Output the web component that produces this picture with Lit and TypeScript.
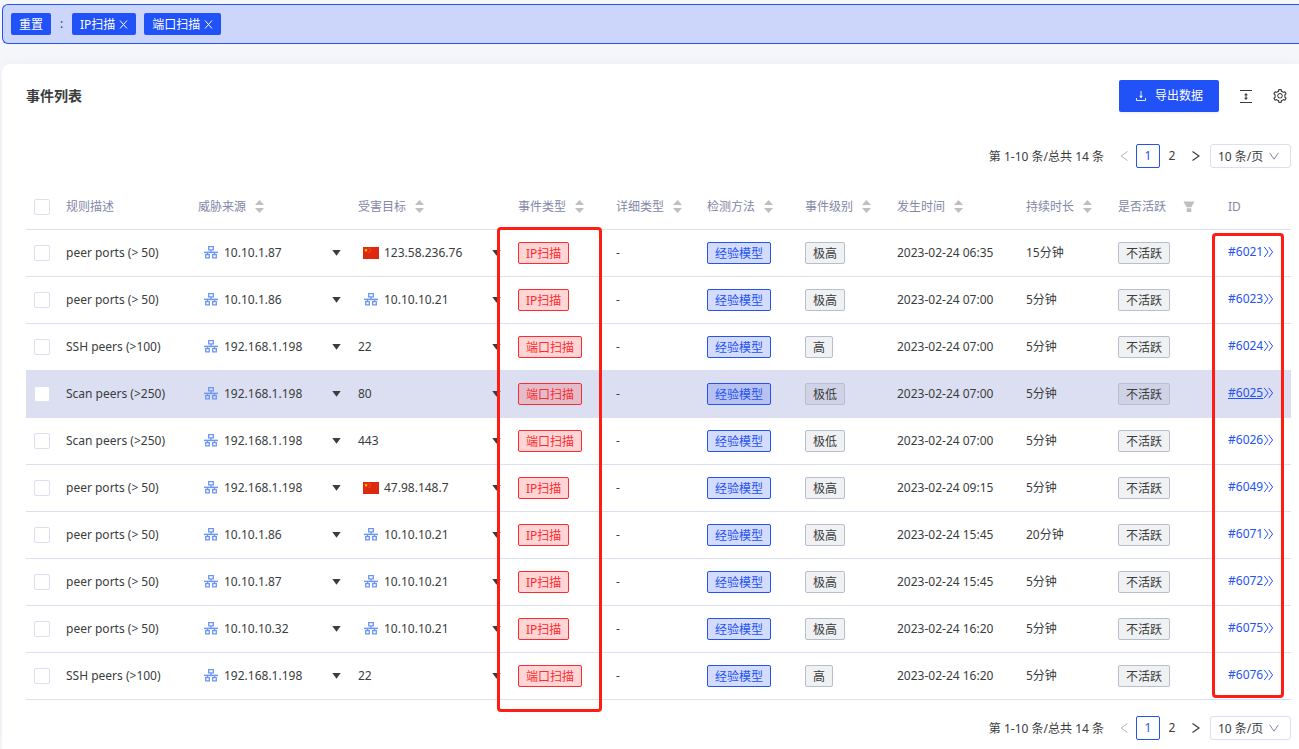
import { LitElement, html, css, svg, nothing } from "lit";
import { customElement, property, state } from "lit/decorators.js";

interface Host {
  kind: "lan" | "cn" | "port";
  text: string;
}
interface EventRow {
  rule: string;
  source: string;
  target: Host;
  type: string;
  level: string;
  time: string;
  duration: string;
  id: string;
  active?: boolean;
}

const lan = (text: string): Host => ({ kind: "lan", text });
const cn = (text: string): Host => ({ kind: "cn", text });
const port = (text: string): Host => ({ kind: "port", text });

const ROWS: EventRow[] = [
  { rule: "peer ports (> 50)", source: "10.10.1.87", target: cn("123.58.236.76"), type: "IP扫描", level: "极高", time: "2023-02-24 06:35", duration: "15分钟", id: "6021" },
  { rule: "peer ports (> 50)", source: "10.10.1.86", target: lan("10.10.10.21"), type: "IP扫描", level: "极高", time: "2023-02-24 07:00", duration: "5分钟", id: "6023" },
  { rule: "SSH peers (>100)", source: "192.168.1.198", target: port("22"), type: "端口扫描", level: "高", time: "2023-02-24 07:00", duration: "5分钟", id: "6024" },
  { rule: "Scan peers (>250)", source: "192.168.1.198", target: port("80"), type: "端口扫描", level: "极低", time: "2023-02-24 07:00", duration: "5分钟", id: "6025", active: true },
  { rule: "Scan peers (>250)", source: "192.168.1.198", target: port("443"), type: "端口扫描", level: "极低", time: "2023-02-24 07:00", duration: "5分钟", id: "6026" },
  { rule: "peer ports (> 50)", source: "192.168.1.198", target: cn("47.98.148.7"), type: "IP扫描", level: "极高", time: "2023-02-24 09:15", duration: "5分钟", id: "6049" },
  { rule: "peer ports (> 50)", source: "10.10.1.86", target: lan("10.10.10.21"), type: "IP扫描", level: "极高", time: "2023-02-24 15:45", duration: "20分钟", id: "6071" },
  { rule: "peer ports (> 50)", source: "10.10.1.87", target: lan("10.10.10.21"), type: "IP扫描", level: "极高", time: "2023-02-24 15:45", duration: "5分钟", id: "6072" },
  { rule: "peer ports (> 50)", source: "10.10.10.32", target: lan("10.10.10.21"), type: "IP扫描", level: "极高", time: "2023-02-24 16:20", duration: "5分钟", id: "6075" },
  { rule: "SSH peers (>100)", source: "192.168.1.198", target: port("22"), type: "端口扫描", level: "高", time: "2023-02-24 16:20", duration: "5分钟", id: "6076" },
];

const COLUMNS: { title: string; tool?: "sort" | "filter" }[] = [
  { title: "规则描述" },
  { title: "威胁来源", tool: "sort" },
  { title: "受害目标", tool: "sort" },
  { title: "事件类型", tool: "sort" },
  { title: "详细类型", tool: "sort" },
  { title: "检测方法", tool: "sort" },
  { title: "事件级别", tool: "sort" },
  { title: "发生时间", tool: "sort" },
  { title: "持续时长", tool: "sort" },
  { title: "是否活跃", tool: "filter" },
  { title: "ID" },
];

const base = css`
  *,
  *::before,
  *::after {
    box-sizing: border-box;
  }
  button,
  select,
  input {
    font: inherit;
    color: inherit;
    margin: 0;
  }
  button {
    padding: 0;
    border: 0;
    background: none;
    cursor: pointer;
  }
  svg {
    display: block;
    flex: none;
  }
`;

const icon = (w: number, h: number, box: string, body: unknown) =>
  html`<svg width=${w} height=${h} viewBox=${box} fill="none" aria-hidden="true">${body}</svg>`;

const closeIcon = icon(9, 9, "0 0 9 9", svg`<path d="M1 .5l7 8M8 .5l-7 8" stroke="currentColor"/>`);
const downloadIcon = icon(12, 12, "0 0 12 12", svg`
  <path d="M6 1v6.500M1.500 8v2.500h9V8" stroke="currentColor" stroke-opacity=".85"/>
  <path d="M6 8.200L4.200 5.800h3.600z" fill="currentColor"/>`);
const heightIcon = icon(14, 14, "0 0 14 14", svg`
  <path d="M1 1.500h12M1 13.500h12M7 5v5" stroke="currentColor"/>
  <path d="M7 4l2 2.200H5zM7 11l2-2.200H5z" fill="currentColor"/>`);
const gearIcon = icon(16, 16, "0 0 1024 1024", svg`
  <path fill="currentColor" d="M924.8 625.7l-65.5-56c3.1-19 4.7-38.4 4.7-57.8s-1.6-38.8-4.7-57.8l65.5-56a32.03 32.03 0 009.3-35.2l-.9-2.6a443.74 443.74 0 00-79.7-137.9l-1.8-2.1a32.12 32.12 0 00-35.1-9.5l-81.3 28.9c-30-24.6-63.5-44-99.7-57.6l-15.7-85a32.05 32.05 0 00-25.8-25.7l-2.7-.5c-52.1-9.4-106.9-9.4-159 0l-2.7.5a32.05 32.05 0 00-25.8 25.7l-15.8 85.4a351.86 351.86 0 00-99 57.4l-81.9-29.1a32 32 0 00-35.1 9.5l-1.8 2.1a446.02 446.02 0 00-79.7 137.9l-.9 2.6c-4.5 12.5-.8 26.5 9.3 35.2l66.3 56.6c-3.1 18.8-4.6 38-4.6 57.1 0 19.2 1.5 38.4 4.6 57.1L99 625.5a32.03 32.03 0 00-9.3 35.2l.9 2.6c18.1 50.4 44.9 96.9 79.7 137.9l1.8 2.1a32.12 32.12 0 0035.1 9.5l81.9-29.1c29.8 24.5 63.1 43.9 99 57.4l15.8 85.4a32.05 32.05 0 0025.8 25.7l2.7.5a449.4 449.4 0 00159 0l2.7-.5a32.05 32.05 0 0025.8-25.7l15.7-85a350 350 0 0099.7-57.6l81.3 28.9a32 32 0 0035.1-9.5l1.8-2.1c34.8-41.1 61.6-87.5 79.7-137.9l.9-2.6c4.5-12.3.8-26.3-9.3-35zM788.3 465.9c2.5 15.1 3.8 30.6 3.8 46.1s-1.3 31-3.8 46.1l-6.6 40.1 74.7 63.9a370.03 370.03 0 01-42.6 73.6L721 702.8l-31.4 25.8c-23.9 19.6-50.5 35-79.3 45.8l-38.1 14.3-17.9 97a377.5 377.5 0 01-85 0l-17.9-97.2-37.8-14.5c-28.5-10.8-55-26.2-78.7-45.7l-31.4-25.9-93.4 33.2c-17-22.9-31.2-47.6-42.6-73.6l75.5-64.5-6.5-40c-2.4-14.9-3.7-30.3-3.7-45.5 0-15.3 1.2-30.6 3.7-45.5l6.5-40-75.5-64.5c11.3-26.1 25.6-50.7 42.6-73.6l93.4 33.2 31.4-25.9c23.7-19.5 50.2-34.9 78.7-45.7l37.9-14.3 17.9-97.2c28.1-3.2 56.8-3.2 85 0l17.9 97 38.1 14.3c28.7 10.8 55.4 26.2 79.3 45.8l31.4 25.8 92.8-32.9c17 22.9 31.2 47.6 42.6 73.6L781.8 426l6.5 39.9zM512 326c-97.2 0-176 78.8-176 176s78.8 176 176 176 176-78.8 176-176-78.800-176-176-176zm79.200 255.200A111.600 111.600 0 01512 614c-29.900 0-58-11.700-79.200-32.800A111.600 111.600 0 01400 502c0-29.900 11.700-58 32.800-79.200C454 401.600 482.100 390 512 390c29.900 0 58 11.600 79.200 32.800A111.600 111.600 0 01624 502c0 29.900-11.700 58-32.800 79.200z"/>`);
const prevIcon = icon(8, 12, "0 0 8 12", svg`<path d="M7.500 1.500L1 6l6.500 4.500" stroke="currentColor"/>`);
const nextIcon = icon(8, 12, "0 0 8 12", svg`<path d="M.5 1.500L7 6 .5 10.500" stroke="currentColor" stroke-width="1.2"/>`);
const downIcon = icon(10, 8, "0 0 10 8", svg`<path d="M.6 .8L5 7.200 9.400 .8" stroke="currentColor"/>`);
const sortIcon = icon(9, 14, "0 0 9 14", svg`
  <path d="M4.500 0L9 5H0zM0 8h9l-4.500 5z" fill="#bfbfbf"/>`);
const filterIcon = icon(12, 12, "0 0 12 12", svg`
  <path d="M.5 .5h11L8.300 6.200H3.700zM3.700 7.200h4.600v3.800H3.700z" fill="#bfbfbf"/>`);
const lanIcon = icon(14, 14, "0 0 14 14", svg`
  <path d="M4.700.7h4.600v3.200H4.700zM7 4v2M3.500 6.500v2M10.500 6.500v2M1.700 8.600h3.600v3.200H1.700zM8.700 8.600h3.600v3.200H8.700z" stroke="#6c96f3" stroke-width="1.3"/>
  <path d="M0 6.400h14" stroke="#6c96f3" stroke-width="1.500"/>`);
const flagIcon = icon(16, 12, "0 0 16 12", svg`
  <path d="M0 0h16v12H0z" fill="#de2910"/>
  <path d="M3 1.200l.5 1.400H5l-1.200.9.500 1.500L3 4.100l-1.300.9.500-1.500L1 2.600h1.500z" fill="#ffc800"/>
  <g fill="#f08a10"><circle cx="6" cy="1.300" r=".5"/><circle cx="7.300" cy="2.500" r=".5"/><circle cx="7.300" cy="4.100" r=".5"/><circle cx="6" cy="5.300" r=".5"/></g>`);
const caretIcon = icon(9, 6, "0 0 9 6", svg`<path d="M.3 0h8.400L4.500 5.800z" fill="#3a3c3e"/>`);
const moreIcon = icon(11, 12, "0 0 11 12", svg`
  <path d="M1.200.9l3.900 5.100-3.900 5.100M5.700.9l3.900 5.100-3.900 5.100" stroke="currentColor"/>`);

@customElement("event-filters")
export class EventFilters extends LitElement {
  @state() private filters = ["IP扫描", "端口扫描"];

  static styles = [
    base,
    css`
      :host {
        display: flex;
        align-items: center;
        gap: 8px;
        height: 40px;
        padding: 0 8px;
        border: 1px solid #2452f5;
        border-right: 0;
        border-radius: 6px 0 0 6px;
        background: #ccd6fa;
      }
      .chip {
        display: flex;
        align-items: center;
        gap: 4px;
        height: 22px;
        padding: 1px 8px 0;
        border-radius: 2px;
        background: #2152f8;
        color: #fff;
        line-height: 22px;
      }
      .colon {
        width: 5px;
        text-align: center;
      }
    `,
  ];

  render() {
    return html`
      <button class="chip" @click=${() => (this.filters = [])}>重置</button>
      <span class="colon">:</span>
      ${this.filters.map(
        (name) => html`<span class="chip">${name}<button
            aria-label="移除 ${name}"
            @click=${() => (this.filters = this.filters.filter((f) => f !== name))}
          >${closeIcon}</button></span>`
      )}
    `;
  }
}

@customElement("page-nav")
export class PageNav extends LitElement {
  static styles = [
    base,
    css`
      :host {
        display: flex;
        justify-content: flex-end;
        align-items: center;
        height: 24px;
        line-height: 22px;
      }
      .total {
        margin-right: 8px;
        padding-top: 2px;
      }
      .page {
        display: flex;
        align-items: center;
        justify-content: center;
        width: 24px;
        height: 24px;
        border-radius: 2px;
      }
      .current {
        border: 1px solid #2452f5;
        color: #2452f5;
      }
      .page:disabled {
        color: #b4b4b4;
        cursor: default;
      }
      .size {
        display: grid;
        align-items: center;
        margin-left: 2px;
        width: 81px;
      }
      .size > * {
        grid-area: 1 / 1;
      }
      .size select {
        appearance: none;
        width: 100%;
        height: 24px;
        padding: 1px 7px 0;
        border: 1px solid #dcdff1;
        border-radius: 3px;
        background: #fff;
        outline: 0;
      }
      .arrow {
        justify-self: end;
        margin-right: 12px;
        color: #8487a7;
        pointer-events: none;
      }
    `,
  ];

  render() {
    return html`
      <span class="total">第 1-10 条/总共 14 条</span>
      <button class="page" disabled aria-label="上一页">${prevIcon}</button>
      <button class="page current">1</button>
      <button class="page">2</button>
      <button class="page" aria-label="下一页">${nextIcon}</button>
      <label class="size">
        <select aria-label="每页条数">
          <option>10 条/页</option>
          <option>20 条/页</option>
          <option>50 条/页</option>
        </select>
        <span class="arrow">${downIcon}</span>
      </label>
    `;
  }
}

@customElement("event-table")
export class EventTable extends LitElement {
  @property({ attribute: false }) rows: EventRow[] = [];

  static styles = [
    base,
    css`
      :host {
        display: block;
        position: relative;
      }
      table {
        width: 100%;
        table-layout: fixed;
        border-collapse: separate;
        border-spacing: 0;
      }
      .w-check { width: 32px; }
      .w-rule { width: 132px; }
      .w-host { width: 160px; }
      .w-type { width: 98px; }
      .w-detail { width: 91px; }
      .w-method { width: 98px; }
      .w-level { width: 92px; }
      .w-time { width: 129px; }
      .w-span { width: 92px; }
      .w-state { width: 110px; }
      .w-id { width: 71px; }
      th,
      td {
        height: 47px;
        padding: 0 8px;
        border-bottom: 1px solid #dcdff1;
        text-align: left;
        vertical-align: middle;
        white-space: nowrap;
      }
      th {
        height: 46px;
        color: #8487a7;
        font-weight: 400;
      }
      .active td {
        background: #dcdff1;
      }
      .head {
        display: flex;
        align-items: center;
        gap: 9px;
      }
      .head.wide {
        gap: 17px;
      }
      .check {
        display: block;
        appearance: none;
        width: 16px;
        height: 16px;
        border: 1px solid #dcdff1;
        border-radius: 2px;
        background: #fff;
      }
      .host {
        display: flex;
        align-items: center;
      }
      .mark {
        display: flex;
        justify-content: center;
        width: 26px;
      }
      .caret {
        margin-left: auto;
        padding: 4px 1px 4px 2px;
      }
      .tag {
        display: inline-block;
        height: 22px;
        padding: 0 7px;
        border: 1px solid;
        border-radius: 2px;
        line-height: 22px;
        vertical-align: middle;
      }
      .red {
        color: #fd2c2f;
        background: rgba(253, 44, 47, 0.2);
      }
      .blue {
        color: #2452f5;
        background: rgba(36, 82, 245, 0.2);
      }
      .gray {
        border-color: #b9bdcc;
        background: rgba(60, 75, 90, 0.08);
      }
      .link {
        display: flex;
        align-items: center;
        padding-bottom: 2px;
        color: #2452f5;
        text-decoration: none;
      }
      .active .link {
        text-decoration: underline;
      }
      .marks {
        position: absolute;
        inset: 0;
        display: grid;
        grid-template-columns: 32fr 132fr 160fr 160fr 98fr 91fr 98fr 92fr 129fr 92fr 110fr 71fr;
        pointer-events: none;
      }
      .box {
        border: 3px solid #ff1d13;
        border-radius: 4px;
      }
      .box-type {
        grid-column: 5;
        margin: 43px 6px -12px -13px;
      }
      .box-id {
        grid-column: 12;
        margin: 49px 7px 2px -8px;
      }
    `,
  ];

  private host(h: Host) {
    const mark = h.kind === "lan" ? lanIcon : h.kind === "cn" ? flagIcon : null;
    return html`<div class="host">
      ${mark ? html`<span class="mark">${mark}</span>` : nothing}
      <span>${h.text}</span>
      <button class="caret" aria-label="展开 ${h.text}">${caretIcon}</button>
    </div>`;
  }

  render() {
    const widths = ["check", "rule", "host", "host", "type", "detail", "method", "level", "time", "span", "state", "id"];
    return html`
      <table>
        <colgroup>
          ${widths.map((w) => html`<col class="w-${w}" />`)}
        </colgroup>
        <thead>
          <tr>
            <th><input class="check" type="checkbox" aria-label="全选" /></th>
            ${COLUMNS.map(
              (c) => html`<th scope="col">
                <div class="head ${c.tool === "filter" ? "wide" : ""}">
                  <span>${c.title}</span>
                  ${c.tool
                    ? html`<button aria-label="${c.tool === "sort" ? "排序" : "筛选"} ${c.title}">
                        ${c.tool === "sort" ? sortIcon : filterIcon}
                      </button>`
                    : nothing}
                </div>
              </th>`
            )}
          </tr>
        </thead>
        <tbody>
          ${this.rows.map(
            (r) => html`<tr class=${r.active ? "active" : ""}>
              <td><input class="check" type="checkbox" aria-label="选择 ${r.id}" /></td>
              <td>${r.rule}</td>
              <td>${this.host(lan(r.source))}</td>
              <td>${this.host(r.target)}</td>
              <td><span class="tag red">${r.type}</span></td>
              <td>-</td>
              <td><span class="tag blue">经验模型</span></td>
              <td><span class="tag gray">${r.level}</span></td>
              <td>${r.time}</td>
              <td>${r.duration}</td>
              <td><span class="tag gray">不活跃</span></td>
              <td><a class="link" href="#${r.id}">#${r.id}${moreIcon}</a></td>
            </tr>`
          )}
        </tbody>
      </table>
      <div class="marks">
        <div class="box box-type"></div>
        <div class="box box-id"></div>
      </div>
    `;
  }
}

@customElement("app-root")
export class AppRoot extends LitElement {
  static styles = [
    base,
    css`
      :host {
        display: flex;
        flex-direction: column;
        gap: 20px;
        min-height: 100vh;
        box-sizing: border-box;
        padding: 4px 0 0 2px;
        background: #f5f6fa;
        color: #3a3c3e;
        font-family: "Noto Sans", "Noto Sans CJK SC", sans-serif;
        font-size: 12px;
        line-height: 20px;
      }
      .card {
        flex: 1;
        display: flex;
        flex-direction: column;
        gap: 16px;
        padding: 16px 8px 9px 24px;
        border-radius: 8px 0 0 0;
        background: #fff;
        box-shadow: 0 0 12px rgba(40, 50, 90, 0.04);
      }
      .top {
        display: flex;
        align-items: center;
        margin-bottom: 16px;
      }
      .title {
        margin: 0;
        font-size: 14px;
        font-weight: 600;
      }
      .export {
        display: flex;
        align-items: center;
        justify-content: center;
        gap: 8px;
        width: 100px;
        height: 32px;
        margin-left: auto;
        border-radius: 2px;
        background: #2152f8;
        color: #fff;
        box-shadow: 0 2px 0 rgba(0, 0, 0, 0.04);
      }
      .tool {
        margin: 0 3px 0 20px;
      }
      .tool.gear {
        margin: 0 3px 0 16px;
      }
    `,
  ];

  render() {
    return html`
      <event-filters></event-filters>
      <section class="card">
        <header class="top">
          <h1 class="title">事件列表</h1>
          <button class="export">${downloadIcon}导出数据</button>
          <button class="tool" aria-label="密度">${heightIcon}</button>
          <button class="tool gear" aria-label="列设置">${gearIcon}</button>
        </header>
        <page-nav></page-nav>
        <event-table .rows=${ROWS}></event-table>
        <page-nav></page-nav>
      </section>
    `;
  }
}
